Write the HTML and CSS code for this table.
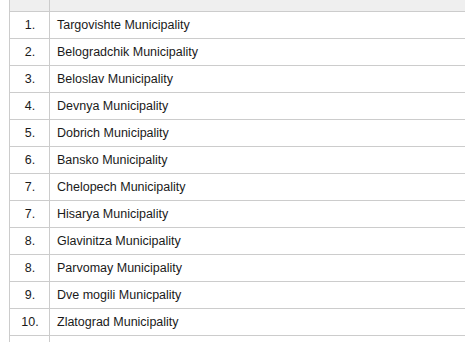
FILE: index.html
```html
<!DOCTYPE html>
<html>
<head>
<meta charset="utf-8">
<link rel="stylesheet" href="styles.css">
</head>
<body>
<div class="frame">
<table class="grid">
<thead>
<tr><th class="num"></th><th class="name"></th></tr>
</thead>
<tbody>
<tr><td class="num">1.</td><td class="name">Targovishte Municipality</td></tr>
<tr><td class="num">2.</td><td class="name">Belogradchik Municipality</td></tr>
<tr><td class="num">3.</td><td class="name">Beloslav Municipality</td></tr>
<tr><td class="num">4.</td><td class="name">Devnya Municipality</td></tr>
<tr><td class="num">5.</td><td class="name">Dobrich Municipality</td></tr>
<tr><td class="num">6.</td><td class="name">Bansko Municipality</td></tr>
<tr><td class="num">7.</td><td class="name">Chelopech Municipality</td></tr>
<tr><td class="num">7.</td><td class="name">Hisarya Municipality</td></tr>
<tr><td class="num">8.</td><td class="name">Glavinitza Municipality</td></tr>
<tr><td class="num">8.</td><td class="name">Parvomay Municipality</td></tr>
<tr><td class="num">9.</td><td class="name">Dve mogili Municpality</td></tr>
<tr><td class="num">10.</td><td class="name">Zlatograd Municipality</td></tr>
<tr><td class="num"></td><td class="name"></td></tr>
</tbody>
</table>
</div>
</body>
</html>
```
FILE: styles.css
```css
html, body {
  margin: 0;
  padding: 0;
  background: #ffffff;
  overflow: hidden;
}
.frame {
  padding-left: 9px;
  width: 470px;
  height: 342px;
  overflow: hidden;
}
.grid {
  border-collapse: collapse;
  table-layout: fixed;
  width: 470px;
  font-family: "Liberation Sans", Arial, sans-serif;
  font-size: 12.5px;
  color: #1a1a1a;
}
.grid th {
  background: #efefef;
  height: 11px;
  padding: 0;
  border: 1px solid #cccccc;
  border-top: none;
}
.grid th.num {
  width: 39px;
}
.grid td {
  height: 26px;
  padding: 0 8px 0 7px;
  border: 1px solid #cccccc;
  vertical-align: middle;
}
.grid td.num {
  padding: 0 0 0 1px;
  text-align: center;
}
.grid td.name {
  text-align: left;
}
```
